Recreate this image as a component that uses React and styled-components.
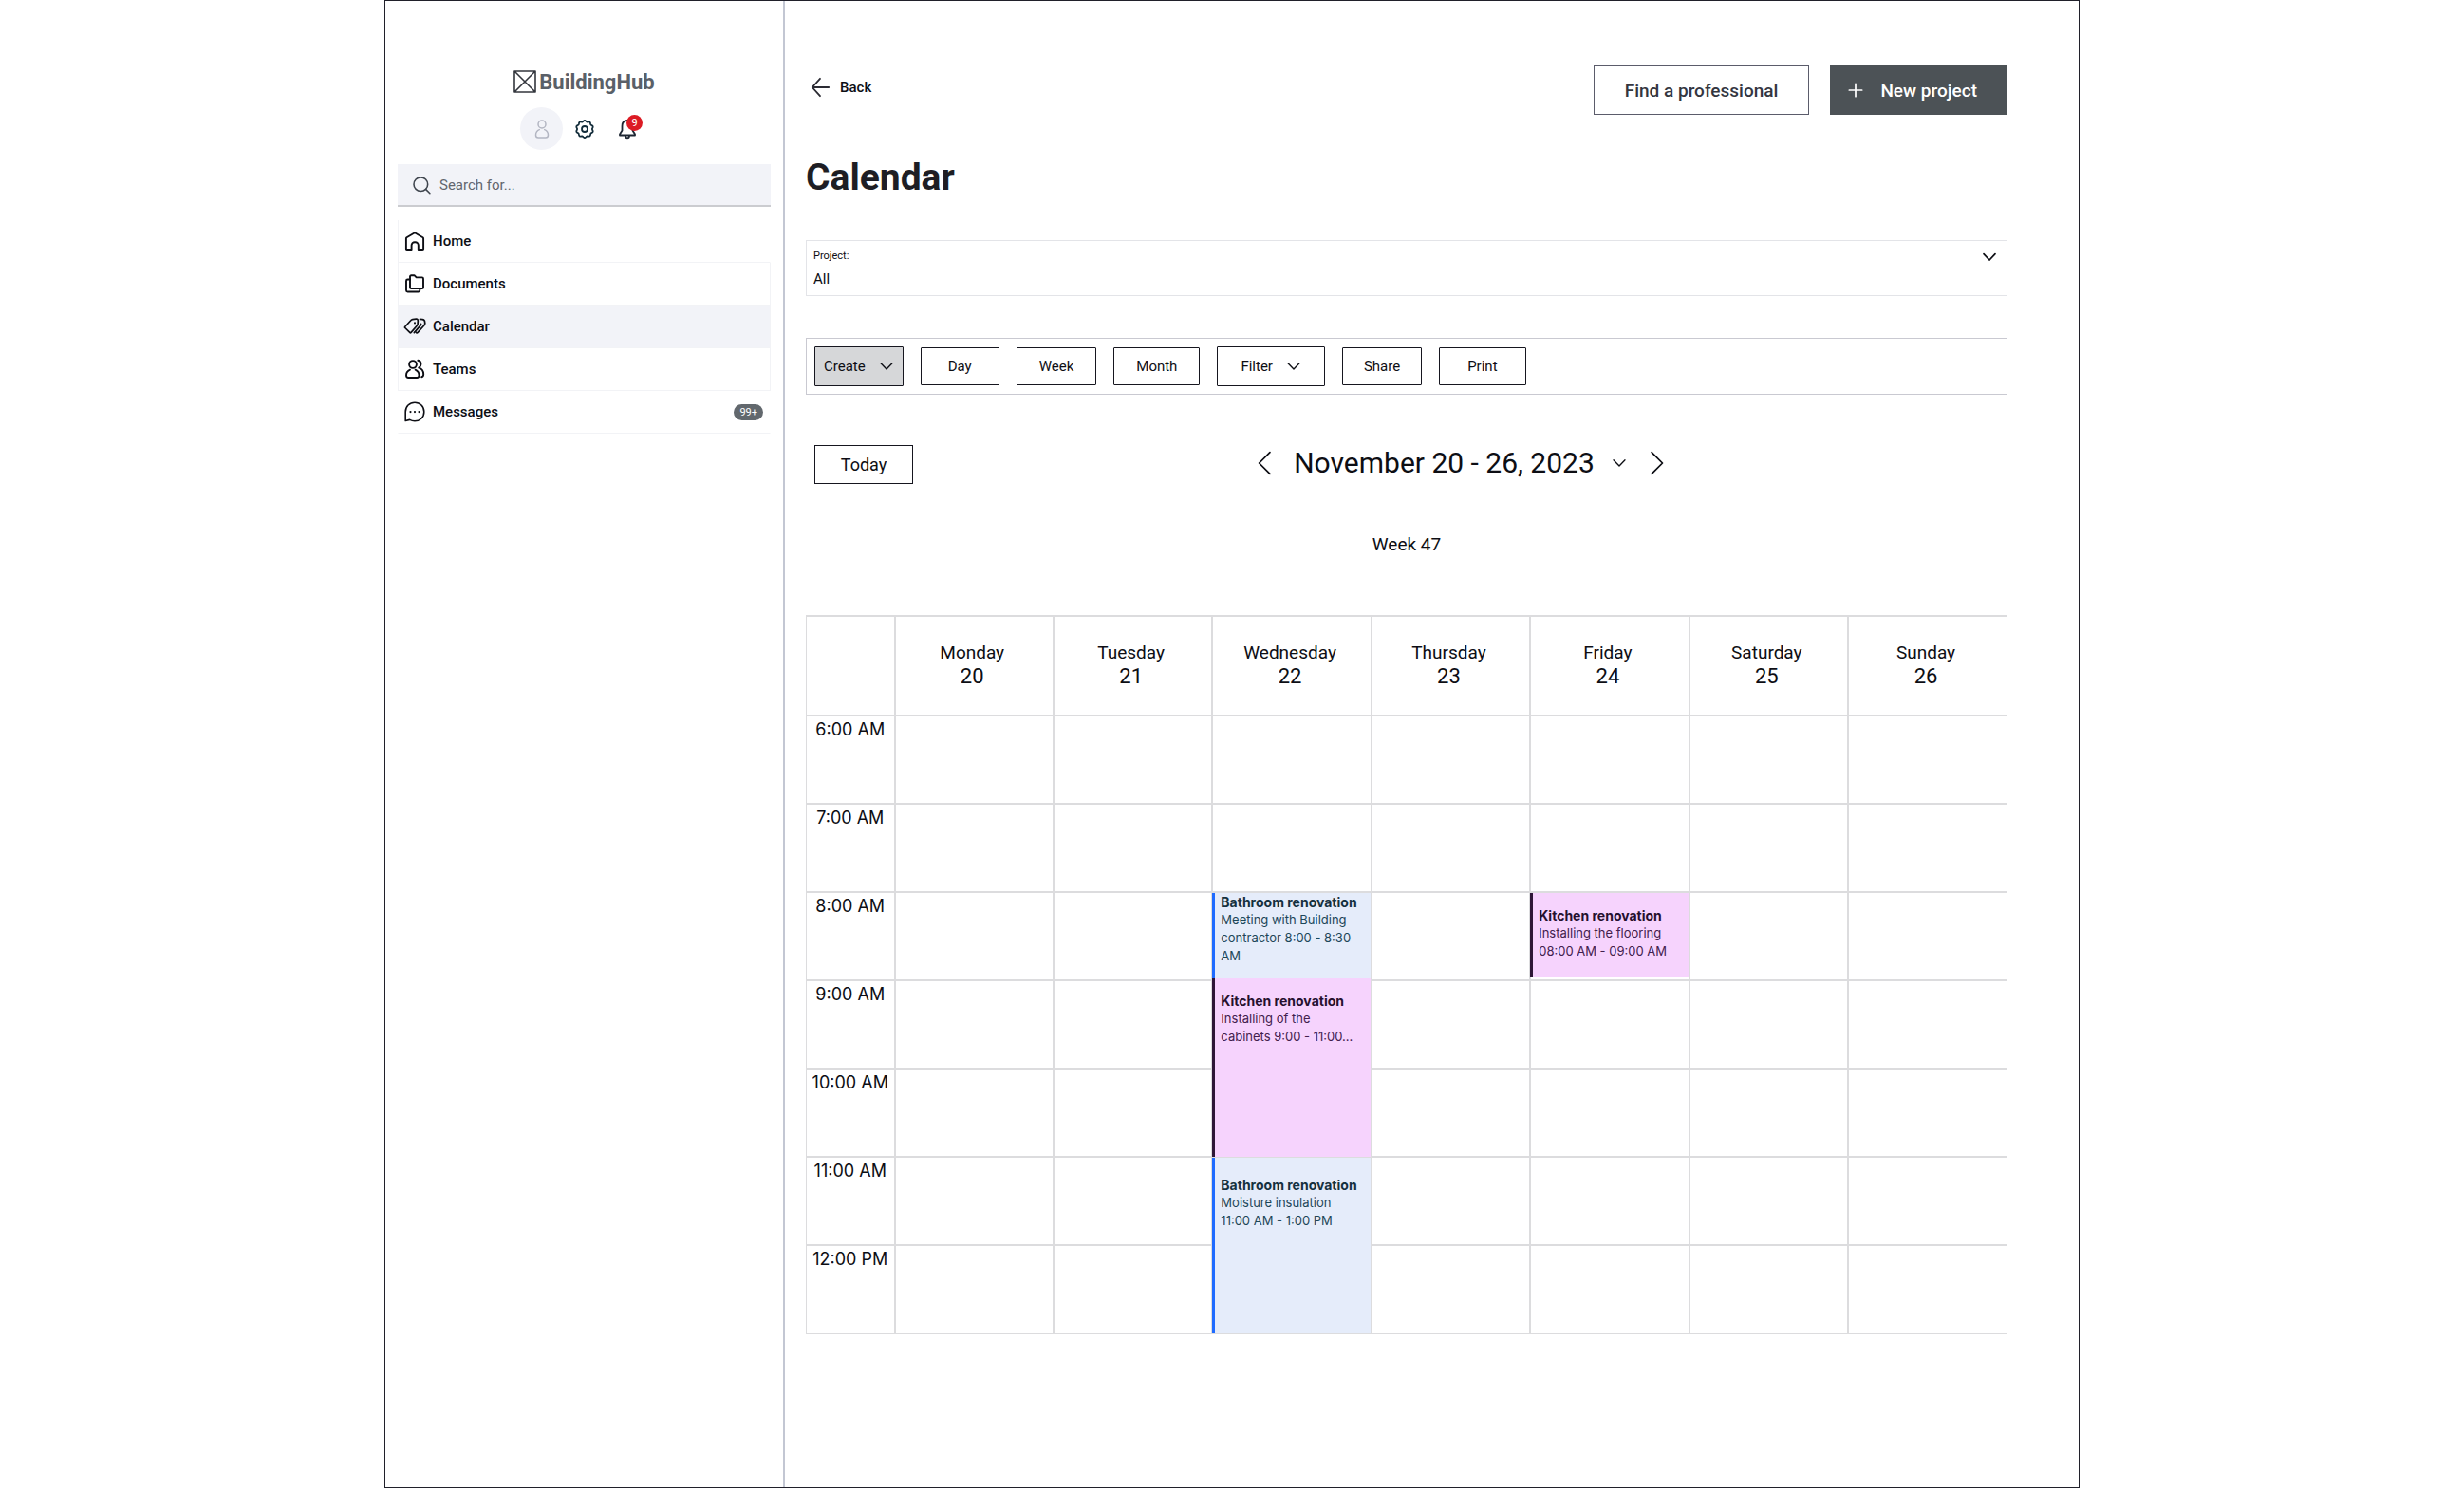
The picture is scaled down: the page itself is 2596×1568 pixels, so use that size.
import React, { useState } from "react";
import styled, { createGlobalStyle } from "styled-components";

const days = [
  ["Monday", 20],
  ["Tuesday", 21],
  ["Wednesday", 22],
  ["Thursday", 23],
  ["Friday", 24],
  ["Saturday", 25],
  ["Sunday", 26],
];

const hours = [
  "6:00 AM",
  "7:00 AM",
  "8:00 AM",
  "9:00 AM",
  "10:00 AM",
  "11:00 AM",
  "12:00 PM",
];

// keyed by "hour row - day"
const events = {
  "8:00 AM-22": [
    {
      title: "Bathroom renovation",
      lines: ["Meeting with Building", "contractor 8:00 - 8:30", "AM"],
      kind: "bathroom",
      height: 90,
      pad: 0,
    },
    {
      title: "Kitchen renovation",
      lines: ["Installing of the", "cabinets 9:00 - 11:00..."],
      kind: "kitchen",
      height: 188,
      pad: 14,
    },
  ],
  "8:00 AM-24": [
    {
      title: "Kitchen renovation",
      lines: ["Installing the flooring", "08:00 AM - 09:00 AM"],
      kind: "kitchen",
      height: 88,
      pad: 14,
    },
  ],
  "11:00 AM-22": [
    {
      title: "Bathroom renovation",
      lines: ["Moisture insulation", "11:00 AM - 1:00 PM"],
      kind: "bathroom",
      height: 185,
      pad: 19,
    },
  ],
};

const eventColors = {
  kitchen: { bar: "#2e1637", fill: "#f6d3fd", title: "#26102e", text: "#42204d" },
  bathroom: { bar: "#1f6bff", fill: "#e5ecfa", title: "#15313f", text: "#1d4759" },
};

const Icon = ({ size = 24, stroke = 2, color = "currentColor", children }) => (
  <svg
    width={size}
    height={size}
    viewBox="0 0 24 24"
    fill="none"
    stroke={color}
    strokeWidth={stroke}
    strokeLinecap="round"
    strokeLinejoin="round"
    aria-hidden="true"
  >
    {children}
  </svg>
);

const LogoIcon = () => (
  <Icon size={24} stroke={1.6} color="#33363d">
    <path d="M1 1h22v22H1zM1 1l22 22M23 1L1 23" />
  </Icon>
);

const UserIcon = () => (
  <Icon size={24} stroke={1.5} color="#b3b6c2">
    <circle cx="12" cy="7" r="4" />
    <path d="M9.3 12.6c-2.4 1-3.8 3-3.8 5.6 0 1.7 1 2.8 2.6 2.8h7.8c1.6 0 2.6-1.1 2.6-2.8 0-2.6-1.4-4.6-3.8-5.6" />
  </Icon>
);

// outline of a wheel with ten soft teeth
const gearPath = Array.from({ length: 80 }, (_, i) => {
  const a = (i / 80) * Math.PI * 2;
  const r = 8.5 + 0.6 * Math.cos(a * 10);
  return `${i ? "L" : "M"}${12 + r * Math.sin(a)} ${12 - r * Math.cos(a)}`;
}).join("");

const GearIcon = () => (
  <Icon size={24} stroke={1.8} color="#122c3a">
    <circle cx="12" cy="12" r="3" />
    <path d={`${gearPath}Z`} />
  </Icon>
);

const BellIcon = () => (
  <Icon size={24} stroke={1.8} color="#1d2733">
    <path d="M12 3C8.500 3 6.500 5.500 6.500 9v4.500L4 17.500v1h16v-1l-2.500-4V9c0-3.500-2-6-5.500-6z" />
    <path d="M10 19c0 1.500.8 2.300 2 2.300s2-.8 2-2.300" />
  </Icon>
);

const SearchIcon = () => (
  <Icon size={20} stroke={1.9} color="#3f454e">
    <circle cx="10" cy="11" r="8.8" />
    <path d="M16.500 17.500L21.500 22.500" />
  </Icon>
);

const navIcons = {
  Home: (
    <Icon stroke={1.9}>
      <path d="M3.500 8.300L12 3.300l8.500 5c.4.3.6.7.6 1.200v10.700c0 .5-.3.800-.8.800h-4.500v-4.500a3.300 3.300 0 0 0-3.300-3.300h-.6a3.300 3.300 0 0 0-3.300 3.300V21H3.700c-.5 0-.8-.3-.8-.8V9.500c0-.5.2-.9.600-1.200z" />
    </Icon>
  ),
  Documents: (
    <Icon stroke={1.9}>
      <path d="M7 4.500c0-.8.500-1.300 1.300-1.300h3.200l2.200 2.200h6c.8 0 1.300.5 1.300 1.300v9c0 .8-.5 1.300-1.300 1.300H8.300c-.8 0-1.300-.5-1.300-1.300z" />
      <path d="M7 7.500H4.500C3.500 7.500 3 8 3 9v10c0 1 .5 1.500 1.500 1.500h11.300c1 0 1.500-.5 1.500-1.500v-2" />
    </Icon>
  ),
  Calendar: (
    <Icon stroke={1.7}>
      <path d="M1.800 12.300L8 5.500c.5-.6 1-.8 1.700-.9l3.800-.4c1.200-.1 1.900.7 1.800 1.900l-.2 3.300c0 .7-.3 1.300-.8 1.800l-6.200 7.200c-.4.400-.9.400-1.300 0l-5-4.900c-.4-.4-.4-.8 0-1.200z" />
      <path d="M17.500 4.400l2.500.2c1.600.1 2.500 1 2.600 2.500l.1 1.600c.1.800-.2 1.500-.7 2.100l-6.900 7.600c-.4.400-1 .5-1.500.1M18.600 9.300c0 .7-.2 1.200-.7 1.800l-6.600 7.500" />
      <path d="M12 8.300v.1" strokeWidth="2" />
    </Icon>
  ),
  Teams: (
    <Icon stroke={1.9}>
      <circle cx="10" cy="7" r="3.900" />
      <path d="M7 12.700C4.500 13.800 3 15.800 3 18.500 3 20.200 3.800 21 5.300 21h8.900c1.500 0 2.300-.8 2.300-2.500 0-2.700-1.500-4.700-3.900-5.800" />
      <path d="M15.300 2.800c1.900.3 3.200 1.900 3.200 4 0 1.700-.8 3-2.300 3.800 3 .8 5 3.500 5 6.900 0 1.500-.6 2.400-2 2.700" />
    </Icon>
  ),
  Messages: (
    <Icon stroke={1.6}>
      <path d="M2.200 21.500V12C2.200 6.300 6.400 2.200 12 2.200S21.800 6.400 21.800 12 17.600 21.700 12 21.700c-2 0-3.700-.4-5.300-1.300z" />
      <path d="M7.500 12v.1M12 12v.1M16.500 12v.1" strokeWidth="2.200" />
    </Icon>
  ),
};

const Chevron = ({ size = 16, stroke = 2 }) => (
  <Icon size={size} stroke={stroke}>
    <path d="M3 7l9 9.500L21 7" />
  </Icon>
);

const App = () => {
  const [project, setProject] = useState("All");

  return (
    <>
      <GlobalStyle />
      <Frame>
        <Sidebar>
          <Brand>
            <LogoIcon />
            BuildingHub
          </Brand>
          <UserBar>
            <Avatar aria-label="Profile">
              <UserIcon />
            </Avatar>
            <IconButton aria-label="Settings">
              <GearIcon />
            </IconButton>
            <IconButton aria-label="Notifications">
              <BellIcon />
              <Count>9</Count>
            </IconButton>
          </UserBar>
          <Search>
            <SearchIcon />
            <SearchInput
              type="search"
              placeholder="Search for..."
              aria-label="Search for"
            />
          </Search>
          <Nav>
            {Object.keys(navIcons).map((name) => (
              <NavLink
                key={name}
                href={`#${name.toLowerCase()}`}
                $active={name === "Calendar"}
                $open={name === "Messages"}
              >
                {navIcons[name]}
                {name}
                {name === "Messages" && <Pill>99+</Pill>}
              </NavLink>
            ))}
          </Nav>
        </Sidebar>

        <Main>
          <TopBar>
            <Back href="#back">
              <Icon size={22} stroke={2} color="#2b2b33">
                <path d="M22 12H3M12 2L3 12l9 10" />
              </Icon>
              Back
            </Back>
            <Actions>
              <Action>Find a professional</Action>
              <Action $primary>
                <Icon size={16} stroke={2.6}>
                  <path d="M12 2v20M2 12h20" />
                </Icon>
                New project
              </Action>
            </Actions>
          </TopBar>

          <Title>Calendar</Title>

          <Project>
            <ProjectText>
              <ProjectLabel htmlFor="project">Project:</ProjectLabel>
              <ProjectSelect
                id="project"
                value={project}
                onChange={(e) => setProject(e.target.value)}
              >
                <option>All</option>
                <option>Bathroom renovation</option>
                <option>Kitchen renovation</option>
              </ProjectSelect>
            </ProjectText>
            <Chevron stroke={2.6} />
          </Project>

          <Toolbar>
            <ToolButton $pad={9} $menu $filled>
              Create
              <Chevron />
            </ToolButton>
            <ToolButton $pad={28}>Day</ToolButton>
            <ToolButton $pad={23}>Week</ToolButton>
            <ToolButton $pad={23}>Month</ToolButton>
            <ToolButton $pad={24} $menu>
              Filter
              <Chevron />
            </ToolButton>
            <ToolButton $pad={22}>Share</ToolButton>
            <ToolButton $pad={29}>Print</ToolButton>
          </Toolbar>

          <Period>
            <Today>Today</Today>
            <PeriodNav>
              <PlainButton aria-label="Previous week">
                <Icon size={26} stroke={1.6}>
                  <path d="M17.500 1.500L7 12l10.500 10.500" />
                </Icon>
              </PlainButton>
              <PeriodTitle>November 20 - 26, 2023</PeriodTitle>
              <PlainButton aria-label="Choose week">
                <Chevron />
              </PlainButton>
              <PlainButton aria-label="Next week">
                <Icon size={26} stroke={1.6}>
                  <path d="M7.500 1.500L18 12 7.500 22.500" />
                </Icon>
              </PlainButton>
            </PeriodNav>
          </Period>
          <WeekNumber>Week 47</WeekNumber>

          <Table>
            <thead>
              <tr>
                <CornerCell />
                {days.map(([name, date]) => (
                  <DayHead key={date} scope="col">
                    {name}
                    <DayNumber>{date}</DayNumber>
                  </DayHead>
                ))}
              </tr>
            </thead>
            <tbody>
              {hours.map((hour) => (
                <tr key={hour}>
                  <HourHead scope="row">{hour}</HourHead>
                  {days.map(([, date]) => {
                    const list = events[`${hour}-${date}`];
                    return (
                      <Slot key={date}>
                        {list && (
                          <EventStack>
                            {list.map((ev) => (
                              <Event
                                key={ev.title}
                                $colors={eventColors[ev.kind]}
                                $height={ev.height}
                                $pad={ev.pad}
                              >
                                <EventTitle $colors={eventColors[ev.kind]}>
                                  {ev.title}
                                </EventTitle>
                                {ev.lines.map((line) => (
                                  <div key={line}>{line}</div>
                                ))}
                              </Event>
                            ))}
                          </EventStack>
                        )}
                      </Slot>
                    );
                  })}
                </tr>
              ))}
            </tbody>
          </Table>
        </Main>
      </Frame>
    </>
  );
};

export default App;

const GlobalStyle = createGlobalStyle`
  * {
    box-sizing: border-box;
  }

  body {
    margin: 0;
    background: #fff;
    color: #0d0e14;
    font-family: Roboto, "Liberation Sans", sans-serif;
    font-size: 15px;
  }

  button, input, select {
    font: inherit;
    color: inherit;
  }

  button {
    cursor: pointer;
  }

  svg {
    display: block;
    flex-shrink: 0;
  }
`;

const Frame = styled.div`
  display: flex;
  width: 100%;
  max-width: 1786px;
  min-height: 100vh;
  margin: 0 auto;
  border: 1px solid #20202a;
`;

const Sidebar = styled.aside`
  width: 421px;
  flex-shrink: 0;
  padding: 72px 13px 0;
  border-right: 2px solid #c3c7d3;
`;

const Brand = styled.div`
  display: flex;
  align-items: center;
  justify-content: center;
  gap: 3px;
  height: 26px;
  color: #5a6068;
  font-size: 22px;
  font-weight: 700;
`;

const UserBar = styled.div`
  display: flex;
  align-items: center;
  justify-content: center;
  margin-top: 14px;
`;

const Avatar = styled.button`
  display: flex;
  align-items: center;
  justify-content: center;
  width: 45px;
  height: 45px;
  padding: 0;
  border: 0;
  border-radius: 50%;
  background: #f2f3f8;
`;

const IconButton = styled.button`
  position: relative;
  display: flex;
  justify-content: center;
  width: 45px;
  padding: 0;
  border: 0;
  background: none;
`;

const Count = styled.span`
  position: absolute;
  top: -3px;
  right: 6px;
  width: 17px;
  height: 17px;
  border-radius: 50%;
  background: #dc1b24;
  color: #fff;
  font-size: 11px;
  line-height: 17px;
  text-align: center;
`;

const Search = styled.label`
  display: flex;
  align-items: center;
  gap: 8px;
  height: 45px;
  margin-top: 15px;
  padding: 0 16px;
  border-bottom: 2px solid #cbccd0;
  background: #f2f3f8;
`;

const SearchInput = styled.input`
  flex: 1;
  min-width: 0;
  padding: 0;
  border: 0;
  outline: 0;
  background: none;

  &::placeholder {
    color: #62666e;
    opacity: 1;
  }
`;

const Nav = styled.nav`
  margin-top: 14px;
`;

const NavLink = styled.a`
  display: flex;
  align-items: center;
  gap: 7px;
  height: 45px;
  padding: 0 7px 0 5px;
  border: 1px solid #f2f3f6;
  border-top: 0;
  border-right-color: ${(props) => (props.$open ? "transparent" : "#f2f3f6")};
  border-left-color: ${(props) => (props.$open ? "transparent" : "#f2f3f6")};
  background: ${(props) => (props.$active ? "#f2f3f8" : "none")};
  color: inherit;
  font-weight: 500;
  text-decoration: none;

  &:first-child {
    border-right-color: transparent;
  }
`;

const Pill = styled.span`
  margin-left: auto;
  padding: 0 6px;
  border-radius: 9px;
  background: #62686d;
  color: #fff;
  font-size: 11px;
  font-weight: 400;
  line-height: 17px;
`;

const Main = styled.main`
  flex: 1;
  min-width: 0;
  padding: 68px 75px 0 22px;
`;

const TopBar = styled.div`
  display: flex;
  align-items: center;
  justify-content: space-between;
`;

const Back = styled.a`
  display: flex;
  align-items: center;
  gap: 10px;
  padding: 0 0 6px 4px;
  color: inherit;
  font-weight: 500;
  text-decoration: none;
`;

const Actions = styled.div`
  display: flex;
  gap: 22px;
`;

const Action = styled.button`
  display: flex;
  align-items: center;
  gap: 18px;
  height: 52px;
  padding: ${(props) => (props.$primary ? "0 31px 0 18px" : "0 32px")};
  border: 1px solid ${(props) => (props.$primary ? "#4c5256" : "#5b5c6b")};
  background: ${(props) => (props.$primary ? "#4c5256" : "#fff")};
  color: ${(props) => (props.$primary ? "#fff" : "#34363f")};
  font-size: 19px;
  font-weight: 500;
`;

const Title = styled.h1`
  margin: 42px 0 0;
  font-size: 39px;
  line-height: 48px;
  color: #1e1e24;
`;

const Project = styled.div`
  display: flex;
  justify-content: space-between;
  height: 59px;
  margin-top: 42px;
  padding: 9px 10px 0 7px;
  border: 1px solid #e3e4e8;
`;

const ProjectText = styled.div`
  flex: 1;
`;

const ProjectLabel = styled.label`
  display: block;
  font-size: 11px;
  line-height: 13px;
`;

const ProjectSelect = styled.select`
  display: block;
  width: 100%;
  margin-top: 9px;
  padding: 0;
  border: 0;
  background: none;
  appearance: none;
`;

const Toolbar = styled.div`
  display: flex;
  align-items: center;
  gap: 18px;
  height: 60px;
  margin-top: 44px;
  padding: 0 8px;
  border: 1px solid #c9c9d1;
`;

const ToolButton = styled.button`
  display: flex;
  align-items: center;
  gap: 14px;
  height: ${(props) => (props.$menu ? 42 : 40)}px;
  padding: 0 ${(props) => props.$pad}px;
  border: 1px solid #16161f;
  border-radius: 1px;
  background: ${(props) => (props.$filled ? "#d6d7d9" : "#fff")};
`;

const Period = styled.div`
  display: flex;
  align-items: center;
  margin-top: 53px;
  padding-left: 9px;
`;

const Today = styled.button`
  width: 104px;
  height: 41px;
  padding: 0;
  border: 1px solid #16161f;
  background: #fff;
  font-size: 18px;
`;

const PeriodNav = styled.div`
  display: flex;
  flex: 1;
  align-items: center;
  justify-content: center;
  gap: 18px;
  padding-bottom: 4px;
`;

const PeriodTitle = styled.h2`
  margin: 0;
  font-size: 30px;
  font-weight: 400;
  line-height: 36px;
`;

const PlainButton = styled.button`
  padding: 0;
  border: 0;
  background: none;
`;

const WeekNumber = styled.p`
  margin: 52px 0 62px;
  font-size: 19px;
  line-height: 24px;
  text-align: center;
`;

const Table = styled.table`
  width: 100%;
  border-collapse: collapse;
  table-layout: fixed;

  tr > :first-child {
    border-left-width: 1px;
  }

  tr > :last-child {
    border-right-width: 1px;
  }

  tbody tr:last-child > * {
    border-bottom-width: 1px;
  }
`;

const CornerCell = styled.td`
  width: 93px;
  border: 2px solid #dcdcde;
`;

const DayHead = styled.th`
  height: 105px;
  padding: 0 4px 4px 0;
  border: 2px solid #dcdcde;
  font-size: 19px;
  font-weight: 400;
  line-height: 25px;
`;

const DayNumber = styled.div`
  font-size: 22px;
`;

const HourHead = styled.th`
  height: 93px;
  padding: 2px 0 0;
  border: 2px solid #dcdcde;
  font-family: Inter, "Liberation Sans", sans-serif;
  font-size: 18px;
  font-weight: 400;
  line-height: 24px;
  vertical-align: top;
  white-space: nowrap;
`;

const Slot = styled.td`
  position: relative;
  padding: 0;
  border: 2px solid #dcdcde;
`;

/* covers the left grid line so the coloured bar replaces it */
const EventStack = styled.div`
  position: absolute;
  top: 0;
  right: 0;
  left: -1px;
  z-index: 1;
`;

const Event = styled.article`
  height: ${(props) => props.$height}px;
  padding: ${(props) => props.$pad}px 0 0 6px;
  border-left: 3px solid ${(props) => props.$colors.bar};
  background: ${(props) => props.$colors.fill};
  color: ${(props) => props.$colors.text};
  font-family: Inter, "Liberation Sans", sans-serif;
  font-size: 13px;
  line-height: 19px;
  white-space: nowrap;
`;

const EventTitle = styled.strong`
  display: block;
  color: ${(props) => props.$colors.title};
  font-size: 14px;
  font-weight: 700;
`;
